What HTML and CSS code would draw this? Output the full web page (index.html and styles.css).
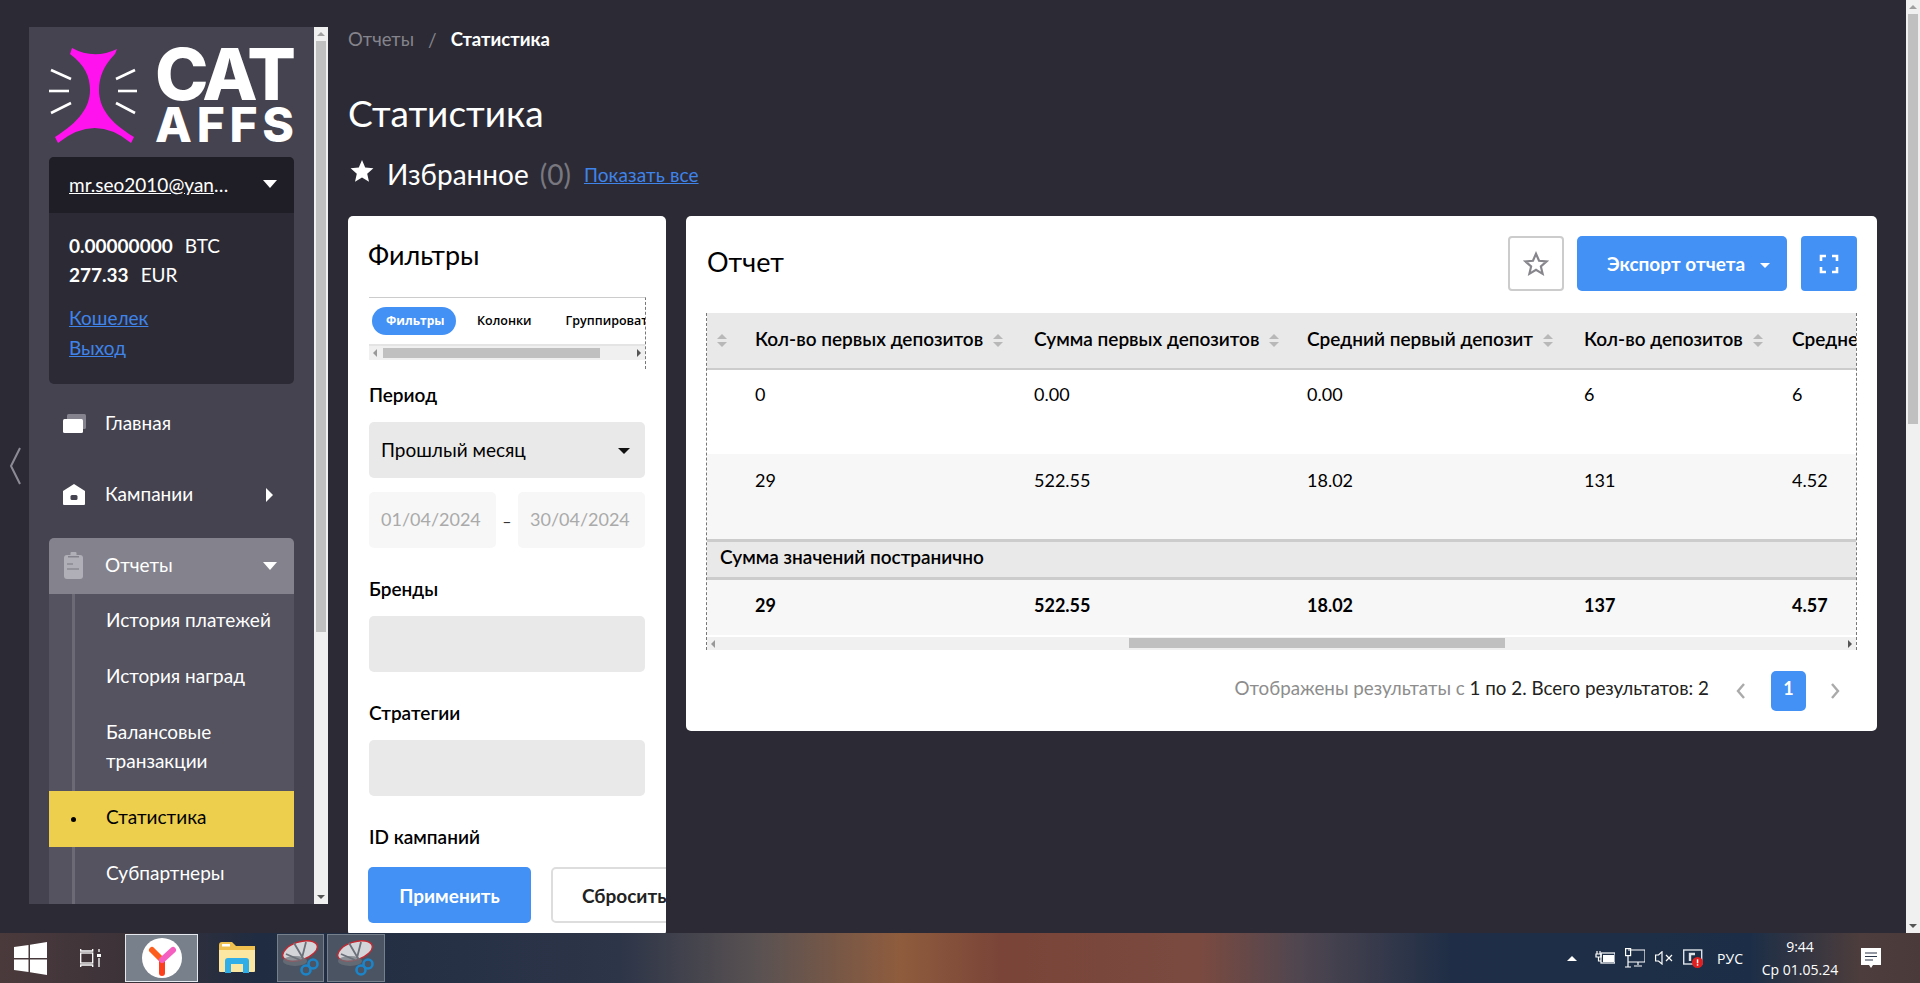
FILE: index.html
```html
<!DOCTYPE html>
<html lang="ru">
<head>
<meta charset="utf-8">
<title>Статистика</title>
<link rel="stylesheet" href="styles.css">
</head>
<body>
<div class="app">
  <div class="desk">
    <div class="gutter">
      <svg class="gutter-chevron" width="14" height="38" viewBox="0 0 14 38"><path d="M12 1 L3 19 L12 37" fill="none" stroke="#8d8c96" stroke-width="2"/></svg>
    </div>
    <aside class="side-wrap">
      <div class="sidebar">
        <div class="logo">
          <svg class="logo-mark" width="88" height="96" viewBox="0 0 88 96">
            <path fill="#ff12ee" d="M23 1 Q45 13 68 2 L66 7 C55 18 50 30 50 43 C50 60 60 75 85 90 L82 96 Q46 66 9 96 L6 90 C30 75 41 60 41 43 C41 30 36 18 21 7 Z"/>
            <g stroke="#fff" stroke-width="2.6" fill="none">
              <path d="M2 23 L22 32"/><path d="M0 44 L20 44"/><path d="M2 66 L22 56"/>
              <path d="M86 23 L67 32"/><path d="M69 44 L88 44"/><path d="M67 56 L86 66"/>
            </g>
          </svg>
          <div class="logo-text">
            <div class="logo-cat">CAT</div>
            <div class="logo-affs">AFFS</div>
          </div>
        </div>
        <div class="account">
          <div class="account-head">
            <a class="account-mail" href="#">mr.seo2010@yandex.ru</a>
            <span class="caret caret-white"></span>
          </div>
          <div class="account-body">
            <div class="balance"><b>0.00000000</b><span>BTC</span></div>
            <div class="balance"><b>277.33</b><span>EUR</span></div>
            <a class="account-link first-link" href="#">Кошелек</a>
            <a class="account-link" href="#">Выход</a>
          </div>
        </div>
        <nav class="nav">
          <div class="nav-item">
            <svg class="nav-icon" width="26" height="20" viewBox="0 0 26 20"><rect x="6" y="0" width="19" height="15" rx="1.5" fill="#85848e"/><rect x="2" y="5" width="20" height="14" rx="1.5" fill="#fff"/></svg>
            <span class="nav-label">Главная</span>
          </div>
          <div class="nav-item">
            <svg class="nav-icon" width="26" height="22" viewBox="0 0 26 22"><path fill="#fff" d="M13 0 L24 7 V20 Q24 21 23 21 H3 Q2 21 2 20 V7 Z"/><rect x="9.5" y="11" width="7" height="5" rx="1.5" fill="#44434f"/></svg>
            <span class="nav-label">Кампании</span>
            <span class="caret-right"></span>
          </div>
          <div class="nav-group">
            <div class="nav-item nav-open">
              <svg class="nav-icon" width="26" height="28" viewBox="0 0 26 28"><rect x="3" y="3" width="19" height="24" rx="3" fill="#b0afb7"/><rect x="9.5" y="0" width="6" height="5" rx="1" fill="#b0afb7"/><rect x="7" y="4" width="11" height="1.5" fill="#84838d"/><rect x="6" y="11" width="6" height="2" fill="#94939c"/><rect x="6" y="16" width="12" height="2" fill="#94939c"/></svg>
              <span class="nav-label">Отчеты</span>
              <span class="caret caret-white caret-end"></span>
            </div>
            <div class="sub">
              <div class="sub-item">История платежей</div>
              <div class="sub-item">История наград</div>
              <div class="sub-item">Балансовые транзакции</div>
              <div class="sub-item sub-active">Статистика</div>
              <div class="sub-item">Субпартнеры</div>
            </div>
          </div>
        </nav>
      </div>
      <div class="vbar side-bar">
        <span class="vbar-up"></span>
        <span class="vbar-thumb side-thumb"></span>
        <span class="vbar-down"></span>
      </div>
    </aside>
    <main class="main">
      <div class="crumbs">
        <span class="crumb-muted">Отчеты</span>
        <span class="crumb-sep">/</span>
        <span class="crumb-now">Статистика</span>
      </div>
      <h1 class="page-title">Статистика</h1>
      <div class="favs">
        <svg class="favs-star" width="24" height="24" viewBox="0 0 24 24"><path fill="#fff" d="M12 1 L15.2 8.6 L23.4 9.3 L17.2 14.7 L19 22.8 L12 18.5 L5 22.8 L6.8 14.7 L.6 9.3 L8.8 8.6 Z"/></svg>
        <span class="favs-title">Избранное</span>
        <span class="favs-count">(0)</span>
        <a class="favs-link" href="#">Показать все</a>
      </div>
      <div class="cards">
        <section class="card filters">
          <h2 class="card-title filters-title">Фильтры</h2>
          <div class="tabs">
            <div class="tabs-row">
              <span class="tab tab-on">Фильтры</span>
              <span class="tab">Колонки</span>
              <span class="tab">Группировать</span>
            </div>
            <div class="hbar tabs-hbar">
              <span class="arrow-l"></span>
              <span class="tabs-thumb"></span>
              <span class="arrow-r"></span>
            </div>
          </div>
          <label class="field-label label-period">Период</label>
          <div class="select"><span>Прошлый месяц</span><span class="caret caret-dark"></span></div>
          <div class="dates">
            <div class="date">01/04/2024</div>
            <span class="date-dash">–</span>
            <div class="date">30/04/2024</div>
          </div>
          <label class="field-label label-gap">Бренды</label>
          <div class="input"></div>
          <label class="field-label label-gap">Стратегии</label>
          <div class="input"></div>
          <label class="field-label label-gap">ID кампаний</label>
          <div class="actions">
            <button class="btn btn-blue btn-apply">Применить</button>
            <button class="btn btn-line">Сбросить</button>
          </div>
        </section>
        <section class="card report">
          <div class="report-head">
            <h2 class="card-title">Отчет</h2>
            <div class="report-tools">
              <button class="btn-icon">
                <svg width="26" height="26" viewBox="0 0 24 24"><path fill="none" stroke="#86868c" stroke-width="2" d="M12 2.5 L14.8 9 L21.8 9.6 L16.5 14.2 L18.1 21.1 L12 17.4 L5.9 21.1 L7.5 14.2 L2.2 9.6 L9.2 9 Z"/></svg>
              </button>
              <button class="btn btn-blue btn-export">Экспорт отчета<span class="caret caret-white caret-sm"></span></button>
              <button class="btn-icon btn-icon-blue">
                <svg width="20" height="20" viewBox="0 0 20 20"><path fill="none" stroke="#fff" stroke-width="2.6" d="M2 7 V2 H7 M13 2 H18 V7 M18 13 V18 H13 M7 18 H2 V13"/></svg>
              </button>
            </div>
          </div>
          <div class="table-wrap">
            <table class="grid">
              <colgroup>
                <col class="c0"><col class="c1"><col class="c2"><col class="c3"><col class="c4"><col class="c5">
              </colgroup>
              <thead>
                <tr>
                  <th><i class="sort"></i></th>
                  <th>Кол-во первых депозитов<i class="sort"></i></th>
                  <th>Сумма первых депозитов<i class="sort"></i></th>
                  <th>Средний первый депозит<i class="sort"></i></th>
                  <th>Кол-во депозитов<i class="sort"></i></th>
                  <th>Среднее значение депозита<i class="sort"></i></th>
                </tr>
              </thead>
              <tbody>
                <tr><td></td><td>0</td><td>0.00</td><td>0.00</td><td>6</td><td>6</td></tr>
                <tr class="row-alt"><td></td><td>29</td><td>522.55</td><td>18.02</td><td>131</td><td>4.52</td></tr>
                <tr class="row-group"><td colspan="6"><b>Сумма значений постранично</b></td></tr>
                <tr class="row-total"><td></td><td>29</td><td>522.55</td><td>18.02</td><td>137</td><td>4.57</td></tr>
              </tbody>
            </table>
            <div class="hbar table-hbar">
              <span class="arrow-l"></span>
              <span class="table-thumb"></span>
              <span class="arrow-r"></span>
            </div>
          </div>
          <div class="pager">
            <span class="pager-info">Отображены результаты с <em>1 по 2. Всего результатов: 2</em></span>
            <svg class="pager-prev" width="12" height="18" viewBox="0 0 12 18"><path d="M9 2 L3 9 L9 16" fill="none" stroke="#aaa" stroke-width="2.4"/></svg>
            <span class="pager-num">1</span>
            <svg class="pager-next" width="12" height="18" viewBox="0 0 12 18"><path d="M3 2 L9 9 L3 16" fill="none" stroke="#aaa" stroke-width="2.4"/></svg>
          </div>
        </section>
      </div>
    </main>
    <div class="vbar page-bar">
      <span class="vbar-up"></span>
      <span class="vbar-thumb page-thumb"></span>
      <span class="vbar-down"></span>
    </div>
  </div>
  <footer class="taskbar">
    <div class="task-left">
      <svg class="win" width="33" height="33" viewBox="0 0 33 33"><path fill="#fff" d="M0 5 L14.5 3 V16 H0 Z M16 2.8 L33 0 V16 H16 Z M0 17.5 H14.5 V30 L0 28 Z M16 17.5 H33 V33 L16 30.3 Z"/></svg>
      <svg class="taskview" width="22" height="20" viewBox="0 0 22 20"><g fill="none" stroke="#fff" stroke-width="1.3"><rect x=".7" y="5" width="12" height="10"/><path d="M.7 1 V3 H12.7 V1 M.7 19 V17 H12.7 V19 M19 1 V4 M19 10 V19"/></g><rect x="17" y="6" width="4" height="3" fill="#fff"/></svg>
      <div class="task-app task-on">
        <svg width="40" height="40" viewBox="0 0 40 40"><circle cx="20" cy="20" r="20" fill="#fff"/><path d="M20 35 V22" stroke="#fc3f1d" stroke-width="6" stroke-linecap="round"/><path d="M20 22 L10 12" stroke="#fc5f1d" stroke-width="6" stroke-linecap="round"/><path d="M20 22 L31 12" stroke="#f560c0" stroke-width="6" stroke-linecap="round"/></svg>
      </div>
      <div class="task-app task-folder">
        <svg width="36" height="32" viewBox="0 0 36 32"><path fill="#f0c14f" d="M0 3 Q0 0 3 0 H13 L17 4 H36 V28 H0 Z"/><path fill="#fbe7a1" d="M0 8 H36 V29 Q36 30 35 30 H1 Q0 30 0 29 Z"/><rect x="3" y="2" width="8" height="2.5" fill="#fff"/><path fill="#2faee8" d="M6 31 V19 Q6 16 9 16 H27 Q30 16 30 19 V31 H24 V22 H12 V31 Z"/></svg>
      </div>
      <div class="task-app task-snip task-snip-a">
        <svg width="38" height="36" viewBox="0 0 38 36"><ellipse cx="18" cy="11" rx="18" ry="9" transform="rotate(-18 18 11)" fill="#d4d5d9" stroke="#c22a33" stroke-width="1.4"/><ellipse cx="13" cy="21" rx="12" ry="5" fill="#6e747c" opacity=".7"/><path d="M12 3 L22 20 M24 2 L20 18 M4 14 L18 20" stroke="#6b7079" stroke-width="1.8" fill="none"/><g fill="none" stroke="#1c85c9" stroke-width="2.6"><circle cx="31" cy="24" r="4.5"/><circle cx="24" cy="30" r="4.5"/></g></svg>
      </div>
      <div class="task-app task-snip task-snip-b">
        <svg width="38" height="36" viewBox="0 0 38 36"><ellipse cx="18" cy="11" rx="18" ry="9" transform="rotate(-18 18 11)" fill="#d4d5d9" stroke="#c22a33" stroke-width="1.4"/><ellipse cx="13" cy="21" rx="12" ry="5" fill="#6e747c" opacity=".7"/><path d="M12 3 L22 20 M24 2 L20 18 M4 14 L18 20" stroke="#6b7079" stroke-width="1.8" fill="none"/><g fill="none" stroke="#1c85c9" stroke-width="2.6"><circle cx="31" cy="24" r="4.5"/><circle cx="24" cy="30" r="4.5"/></g></svg>
      </div>
    </div>
    <div class="tray">
      <span class="tray-up"></span>
      <svg width="20" height="16" viewBox="0 0 20 16"><g fill="none" stroke="#fff" stroke-width="1.2"><path d="M2 1 V4 M5 1 V4 M1 4 H6 V7 H1 Z M3.5 7 V11 H6"/><rect x="6" y="3" width="14" height="10"/></g><rect x="8" y="5" width="11" height="7" fill="#fff"/></svg>
      <svg width="20" height="20" viewBox="0 0 20 20"><g fill="none" stroke="#fff" stroke-width="1.2"><path d="M3 2 H20 V14 H3 M3 8 V19 M0 19 H6 M13 14 V17 M9 18 H17"/><rect x=".6" y=".6" width="5" height="7"/></g></svg>
      <svg width="18" height="14" viewBox="0 0 18 14"><g fill="none" stroke="#fff" stroke-width="1.2"><path d="M.6 4 H3.5 L7 .8 V13 L3.5 10 H.6 Z"/><path d="M11 4 L17 10 M17 4 L11 10"/></g></svg>
      <svg width="20" height="20" viewBox="0 0 20 20"><rect x=".7" y="2" width="18" height="14" fill="none" stroke="#dfe3e8" stroke-width="1.4"/><path d="M7 13 V6 H12" fill="none" stroke="#dfe3e8" stroke-width="2.4"/><circle cx="14.5" cy="14.5" r="5.5" fill="#e02020"/><rect x="13.8" y="11.3" width="1.5" height="4" fill="#fff"/><rect x="13.8" y="16.2" width="1.5" height="1.5" fill="#fff"/></svg>
      <span class="tray-lang">РУС</span>
      <div class="tray-clock"><span>9:44</span><span>Ср 01.05.24</span></div>
      <svg class="tray-note" width="20" height="20" viewBox="0 0 20 20"><path fill="#fff" d="M0 0 H20 V17 H12 L10 20 L8 17 H0 Z"/><path d="M4 5 H16 M4 8.5 H16 M4 12 H12" stroke="#2a3448" stroke-width="1.2"/></svg>
    </div>
  </footer>
</div>
</body>
</html>
```

FILE: styles.css
```css
* { box-sizing: border-box; }
html, body { margin: 0; height: 100%; overflow: hidden; }
body { font-family: "Lato", "Noto Sans", sans-serif; font-size: 19px; color: #000; background: #2c2b35; }
a { color: #3f84ea; }
h1, h2 { margin: 0; font-weight: 400; }
.app { display: flex; flex-direction: column; height: 983px; }
.desk { display: flex; height: 933px; flex: none; overflow: hidden; }

.gutter { width: 29px; flex: none; display: flex; align-items: flex-start; }
.gutter-chevron { margin: 447px 0 0 8px; }
.side-wrap { display: flex; width: 299px; height: 877px; margin-top: 27px; flex: none; }
.sidebar { width: 285px; height: 877px; overflow: hidden; background: #44434f; padding: 20px 20px 0; flex: none; color: #fff; }

.logo { display: flex; gap: 18px; height: 96px; }
.logo-mark { flex: none; }
.logo-text { width: 140px; font-family: "Inter", "Liberation Sans", sans-serif; font-weight: 800; color: #fff; }
.logo-cat { font-size: 72px; line-height: 54px; letter-spacing: -4px; height: 60px; }
.logo-affs { font-size: 48px; line-height: 36px; letter-spacing: 4.7px; }

.account { margin-top: 14px; height: 227px; border-radius: 5px; overflow: hidden; background: #2c2b35; }
.account-head { height: 56px; background: #1f1e26; display: flex; align-items: center; justify-content: space-between; padding: 0 17px 2px 20px; }
.account-mail { color: #fff; width: 166px; overflow: hidden; white-space: nowrap; text-overflow: ellipsis; }
.account-body { padding: 18px 20px 0; }
.balance { line-height: 29px; display: flex; gap: 12px; }
.balance b { font-weight: 700; }
.account-link { display: block; line-height: 29.5px; }
.first-link { margin-top: 14px; }

.caret { display: inline-block; width: 0; height: 0; border-style: solid; border-width: 8px 7px 0; border-color: transparent; flex: none; }
.caret-white { border-top-color: #fff; }
.caret-dark { border-top-color: #111; }
.caret-sm { border-width: 5px 5px 0; margin-left: 15px; vertical-align: 3px; }
.caret-right { width: 0; height: 0; border-style: solid; border-width: 7px 0 7px 7px; border-color: transparent transparent transparent #fff; margin: -1px 21px 0 auto; }
.caret-end { margin: -1px 17px 0 auto; }

.nav { margin-top: 12px; display: flex; flex-direction: column; gap: 15px; }
.nav-item { height: 56px; display: flex; align-items: center; padding-left: 12px; }
.nav-icon { flex: none; margin-right: 18px; }
.nav-label { margin-top: -3px; }
.nav-open { background: #84838d; border-radius: 5px 5px 0 0; }
.sub { background: #54535f; position: relative; padding-bottom: 20px; }
.sub::before { content: ""; position: absolute; left: 23px; top: 0; bottom: 0; width: 3px; background: #6b6a75; }
.sub-item { position: relative; padding: 10.5px 20px 16.5px 57px; line-height: 29px; }
.sub-active { background: #edcf4d; color: #000; }
.sub-active::before { content: ""; position: absolute; left: 22px; top: 26px; width: 5px; height: 5px; border-radius: 50%; background: #000; }

.vbar { width: 14px; flex: none; background: #f0f0f0; display: flex; flex-direction: column; align-items: center; position: relative; }
.vbar-up { width: 0; height: 0; margin: 5px 0 5px; border-style: solid; border-width: 0 4px 4px; border-color: transparent transparent #a0a0a0; }
.vbar-thumb { width: 10px; background: #c0c0c0; }
.vbar-down { width: 0; height: 0; margin-top: auto; margin-bottom: 5px; border-style: solid; border-width: 4px 4px 0; border-color: #555 transparent transparent; }
.side-thumb { height: 591px; }
.page-thumb { height: 410px; }
.page-bar { height: 933px; }

.main { flex: 1; min-width: 0; padding: 0 29px 0 20px; height: 933px; overflow: hidden; }
.crumbs { height: 28px; margin-top: 25px; display: flex; align-items: center; }
.crumb-muted { color: #85848c; font-size: 18.5px; }
.crumb-sep { color: #85848c; margin: 0 14px; }
.crumb-now { color: #fff; font-weight: 700; font-size: 18.5px; }
.page-title { color: #fff; font-size: 37px; line-height: 50px; margin-top: 35px; }
.favs { display: flex; align-items: center; height: 40px; margin-top: 16px; color: #fff; }
.favs-star { margin: -6px 13px 0 2px; }
.favs-title { font-size: 28px; }
.favs-count { font-size: 28px; color: #797880; margin-left: 11px; }
.favs-link { margin-left: 13px; letter-spacing: .1px; }

.cards { display: flex; gap: 20px; align-items: flex-start; margin-top: 22px; }
.card { background: #fff; border-radius: 5px; overflow: hidden; }
.card-title { font-size: 27px; line-height: 34px; }
.filters { width: 318px; flex: none; height: 720px; padding: 22px 0 0 21px; }
.filters-title { height: 59px; margin-left: -1px; }
.tabs { width: 277px; border-top: 1px solid #ccc; border-right: 1px dashed #777; height: 72px; overflow: hidden; }
.tabs-row { display: flex; align-items: center; height: 48px; border-bottom: 2px solid #e4e4e4; padding-left: 3px; white-space: nowrap; overflow: hidden; font-family: "Open Sans", sans-serif; font-size: 12.5px; font-weight: 600; }
.tab { padding: 0 14px; height: 28px; line-height: 28px; margin-right: 6px; border-radius: 14px; flex: none; }
.tab-on { width: 84px; background: #4391f5; color: #fff; font-weight: 700; font-size: 12px; margin-right: 7px; }
.hbar { background: #f0f0f0; display: flex; align-items: center; position: relative; }
.tabs-hbar { height: 14px; padding: 0 4px; }
.arrow-l { width: 0; height: 0; border-style: solid; border-width: 4px 4px 4px 0; border-color: transparent #999 transparent transparent; flex: none; }
.arrow-r { width: 0; height: 0; border-style: solid; border-width: 4px 0 4px 4px; border-color: transparent transparent transparent #555; margin-left: auto; flex: none; }
.tabs-thumb { width: 217px; height: 10px; margin-left: 6px; background: #c0c0c0; }

.field-label { display: block; font-weight: 600; line-height: 24px; }
.label-period { margin-top: 14px; }
.select { width: 276px; height: 56px; margin-top: 15px; background: #e9e9e9; border-radius: 5px; display: flex; align-items: center; justify-content: space-between; padding: 0 15px 2px 12px; }
.caret-dark { border-width: 6px 6px 0; margin-top: 4px; }
.dates { display: flex; width: 276px; align-items: center; margin-top: 14px; }
.date { width: 127px; height: 56px; line-height: 54px; background: #f7f7f7; color: #aaa; border-radius: 5px; padding-left: 12px; font-size: 18px; }
.date-dash { width: 22px; text-align: center; color: #333; font-size: 16px; }
.label-gap { margin-top: 29px; }
.input { width: 276px; height: 56px; margin-top: 15px; background: #e9e9e9; border-radius: 5px; }
.actions { display: flex; gap: 20px; margin-top: 18px; margin-left: -1px; white-space: nowrap; }
.btn { font: inherit; height: 56px; border-radius: 5px; border: 0; font-weight: 700; cursor: pointer; padding: 0; flex: none; }
.btn-blue { background: #4391f5; color: #fff; }
.btn-apply { width: 163px; }
.btn-line { width: 160px; background: #fff; border: 2px solid #ddd; color: #222; text-align: left; padding-left: 29px; }

.report { flex: 1; min-width: 0; height: 515px; padding: 20px 20px 0; }
.report-head { display: flex; align-items: center; justify-content: space-between; height: 55px; padding: 0 0 4px 1px; }
.report-tools { display: flex; gap: 13px; margin-bottom: -4px; }
.btn-icon { width: 56px; height: 55px; border: 2px solid #ccc; background: #fff; border-radius: 4px; padding: 0; display: flex; align-items: center; justify-content: center; }
.btn-icon-blue { background: #4391f5; border: 0; margin-left: 1px; }
.btn-export { width: 210px; height: 55px; padding-left: 13px; }

.table-wrap { margin-top: 22px; border-left: 1px dashed #777; border-right: 1px dashed #777; width: 1151px; overflow: hidden; }
.grid { border-collapse: collapse; table-layout: fixed; width: 1400px; font-size: 18px; }
.c0 { width: 38px; } .c1 { width: 279px; } .c2 { width: 273px; } .c3 { width: 277px; } .c4 { width: 208px; } .c5 { width: 325px; }
.grid th { height: 56px; padding: 0 0 4px 10px; background: #e9e9e9; border-bottom: 2px solid #ccc; text-align: left; font-size: 19px; font-weight: 600; white-space: nowrap; }
.grid th:first-child { padding-left: 0; }
.grid td { vertical-align: top; padding: 12px 0 0 10px; height: 85px; line-height: 24px; }
.grid .row-alt td { background: #f7f7f7; border-bottom: 3px solid #ccc; height: 86px; padding-top: 14px; }
.grid .row-group td { height: 38px; padding: 3px 0 0 13px; background: #e9e9e9; border-bottom: 3px solid #ccc; font-size: 19px; }
.row-group b { font-weight: 600; }
.grid .row-total td { height: 57px; background: #f7f7f7; font-weight: 700; padding: 13px 0 0 10px; }
.sort { display: inline-block; position: relative; width: 10px; height: 13px; margin-left: 10px; vertical-align: -1px; }
.sort::before, .sort::after { content: ""; position: absolute; left: 0; width: 0; height: 0; border-style: solid; border-color: transparent; }
.sort::before { top: 0; border-width: 0 5px 5px; border-bottom-color: #b8b8b8; }
.sort::after { bottom: 0; border-width: 5px 5px 0; border-top-color: #b8b8b8; }
.table-hbar { height: 13px; margin-top: 2px; padding: 0 4px; }
.table-thumb { position: absolute; left: 422px; top: 1px; width: 376px; height: 10px; background: #c0c0c0; }

.pager { display: flex; align-items: center; justify-content: flex-end; height: 40px; margin-top: 21px; }
.pager-info { color: #8d8d8d; font-size: 18.8px; margin-top: -8px; }
.pager-info em { font-style: normal; color: #222; }
.pager-prev { margin-left: 26px; }
.pager-num { width: 35px; height: 40px; margin-left: 24px; background: #4391f5; color: #fff; border-radius: 5px; text-align: center; line-height: 34px; font-weight: 700; font-size: 18px; }
.pager-next { margin: 0 16px 0 23px; }

.taskbar { height: 50px; flex: none; display: flex; justify-content: space-between; align-items: center; background: linear-gradient(90deg, #4b3a3c 0, #3b3238 130px, #1f2c42 260px, #2d3548 620px, #5a5252 760px, #8f5c3d 900px, #7a4438 1000px, #7a4a40 1200px, #4f4650 1300px, #1f2e46 1450px, #1c2e47 1750px, #4d3d3c 1860px, #4b3a3a 100%); color: #fff; font-family: "Open Sans", sans-serif; font-size: 14px; }
.task-left { display: flex; align-items: center; height: 100%; }
.win { margin-left: 14px; }
.taskview { margin-left: 33px; }
.task-app { height: 48px; display: flex; align-items: center; justify-content: center; }
.task-on { width: 73px; margin-left: 23px; background: #78808c; border: 1px solid #e5e8ee; }
.task-folder { width: 36px; margin-left: 21px; }
.task-snip { background: #4a5463; border: 1px solid #76808d; }
.task-snip-a { width: 47px; margin-left: 22px; }
.task-snip-b { width: 58px; margin-left: 3px; }
.tray { display: flex; align-items: center; height: 100%; gap: 10px; padding-right: 39px; }
.tray-up { width: 0; height: 0; border-style: solid; border-width: 0 5px 5px; border-color: transparent transparent #fff; margin-right: 8px; }
.tray-lang { margin-left: 4px; margin-right: 2px; }
.tray-clock { display: flex; flex-direction: column; align-items: center; width: 92px; line-height: 23px; margin: 0 5px 0 -1px; }
```
